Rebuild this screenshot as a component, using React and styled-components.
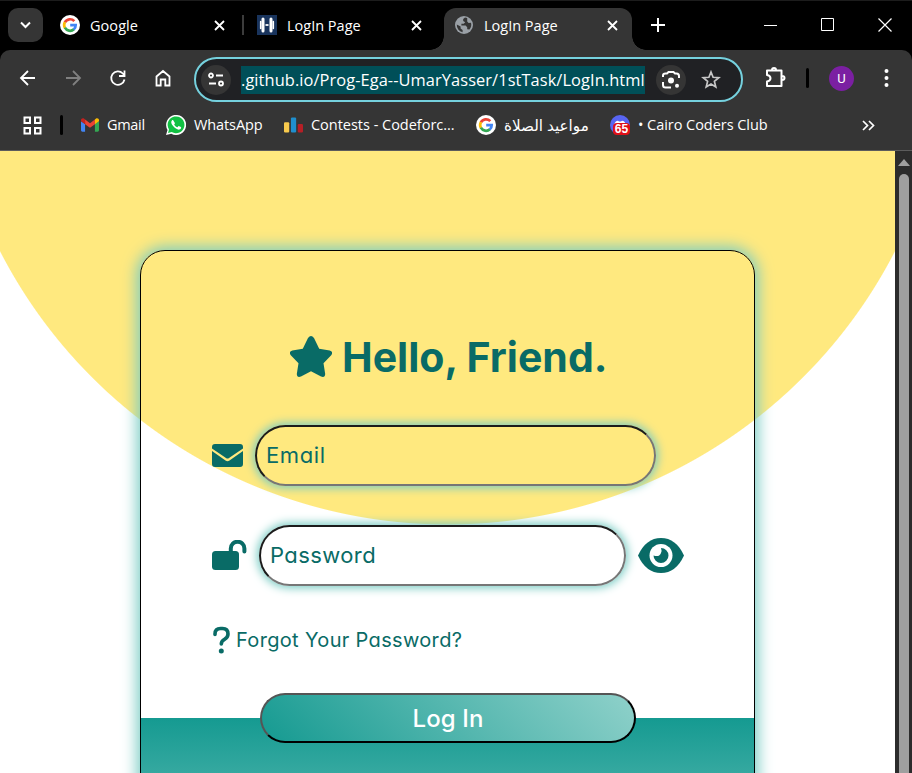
import React from 'react';
import styled, { createGlobalStyle } from 'styled-components';

const TEAL = '#096b66';
const GLOW = '#78cbc3';

const GlobalStyle = createGlobalStyle`
  *, *::before, *::after { box-sizing: border-box; }
  body { margin: 0; overflow: hidden; background: #000; }
`;

const Window = styled.div`
  width: 912px;
  height: 773px;
  display: flex;
  flex-direction: column;
  overflow: hidden;
  background: #000;
  color: #fff;
  font-family: "Open Sans", "Noto Sans", "DejaVu Sans", sans-serif;
`;

const TabStrip = styled.div`
  height: 50px;
  flex: none;
  display: flex;
  align-items: stretch;
  border-top: 1px solid #1c1c1c;
  padding: 7px 0 0 8px;
`;

const TabSearch = styled.div`
  width: 35px;
  height: 34px;
  border-radius: 10px;
  background: #353535;
  display: flex;
  align-items: center;
  justify-content: center;
`;

const Tab = styled.div`
  width: ${(p) => p.$width}px;
  margin-left: ${(p) => p.$gap}px;
  height: ${(p) => (p.$active ? 42 : 34)}px;
  padding: ${(p) => (p.$active ? '0 14px 8px 10px' : '0')};
  border-radius: 12px 12px 0 0;
  background: ${(p) => (p.$active ? '#353535' : 'transparent')};
  display: flex;
  align-items: center;
  gap: 10px;
  position: relative;

  &::before,
  &::after {
    content: ${(p) => (p.$active ? "''" : 'none')};
    position: absolute;
    bottom: 0;
    width: 14px;
    height: 14px;
  }
  &::before {
    left: -14px;
    background: radial-gradient(circle at 0 0, #000 13.5px, #353535 14px);
  }
  &::after {
    right: -14px;
    background: radial-gradient(circle at 100% 0, #000 13.5px, #353535 14px);
  }
`;

const Label = styled.span`
  flex: ${(p) => (p.$grow ? 1 : 'none')};
  padding-top: ${(p) => (p.$grow ? 2 : 0)}px;
  font-size: ${(p) => p.$size || 14.5}px;
  line-height: 20px;
  letter-spacing: ${(p) => p.$track || 0}px;
  white-space: nowrap;
`;

const TabDivider = styled.div`
  width: 2px;
  height: 20px;
  margin: 7px 0 0 17px;
  background: #3c3c3c;
`;

const NewTab = styled.div`
  height: 34px;
  margin-left: 19px;
  display: flex;
  align-items: center;
`;

const WindowControls = styled.div`
  margin-left: auto;
  height: 34px;
  display: flex;
  align-items: center;
  gap: 43px;
  padding-right: 20px;
`;

const Toolbar = styled.div`
  height: 56px;
  flex: none;
  display: flex;
  align-items: center;
  background: #353535;
  border-radius: 10px 10px 0 0;
  padding-left: 18px;
`;

const NavButtons = styled.div`
  display: flex;
  gap: 25px;
  width: 176px;
`;

const AddressBar = styled.div`
  width: 549px;
  height: 45px;
  margin-top: 3px;
  border: 2px solid #75d1de;
  border-radius: 23px;
  background: #202124;
  display: flex;
  align-items: center;
  padding-left: 5px;
`;

const RoundButton = styled.div`
  width: 30px;
  height: 30px;
  flex: none;
  margin-left: ${(p) => (p.$plain ? 10 : 0)}px;
  border-radius: 50%;
  background: ${(p) => (p.$plain ? 'transparent' : '#353535')};
  display: flex;
  align-items: center;
  justify-content: center;
`;

const SelectedUrl = styled.div`
  width: 404px;
  height: 28px;
  margin: 0 11px 0 10px;
  background: #004f58;
  font-size: 16.4px;
  line-height: 27px;
  letter-spacing: 0.08px;
  white-space: nowrap;
`;

const ToolbarActions = styled.div`
  display: flex;
  align-items: center;
  margin-left: 20px;
`;

const Separator = styled.div`
  width: 3px;
  height: 20px;
  margin: ${(p) => p.$margin};
  border-radius: 2px;
  background: #000;
`;

const Avatar = styled.div`
  width: 25px;
  height: 25px;
  border-radius: 50%;
  background: #7b1fa2;
  font: 13px/25px Roboto, sans-serif;
  text-align: center;
  margin-right: 30px;
`;

const BookmarksBar = styled.div`
  height: 45px;
  flex: none;
  display: flex;
  align-items: center;
  background: #353535;
  border-bottom: 1px solid #5c5c5c;
  padding: 0 37px 6px 23px;
`;

const Bookmark = styled.div`
  width: ${(p) => p.$width}px;
  display: flex;
  align-items: center;
  gap: 8px;
`;

const More = styled.div`
  margin-left: auto;
  display: flex;
`;

const Viewport = styled.div`
  flex: 1;
  min-height: 0;
  display: flex;
`;

const Page = styled.main`
  width: 895px;
  padding-top: 99px;
  background: radial-gradient(circle 503px at 447.5px -129.5px, #ffe97f 502.5px, #fff 503.5px);
  color: ${TEAL};
  font-family: Inter, "Open Sans", sans-serif;
  font-feature-settings: "cv11";
  overflow: hidden;
`;

const Card = styled.form`
  width: 615px;
  height: 700px;
  margin: 0 auto;
  border: 1px solid #000;
  border-radius: 25px;
  box-shadow: 0 0 15px 3px ${GLOW};
  background: linear-gradient(#159a91, #8fd1ca) 0 467px / 100% 210px no-repeat;
  padding: 78px 70px 0 71px;
`;

const Title = styled.h1`
  margin: 0;
  height: 54px;
  display: flex;
  align-items: center;
  padding-left: 78px;
  gap: 10px;
  font-size: 41px;
  font-weight: 700;
  white-space: nowrap;
`;

const TitleText = styled.span`
  padding-top: 1px;
  letter-spacing: 0;
`;

const Field = styled.div`
  height: 61px;
  margin-top: ${(p) => p.$top}px;
  display: flex;
  align-items: center;
`;

const IconSlot = styled.span`
  width: ${(p) => p.$width}px;
  display: flex;
  padding-bottom: 1px;
`;

const Input = styled.input`
  width: ${(p) => p.$width}px;
  height: 61px;
  margin: 0 12px 0 0;
  border: 2px solid;
  border-color: #1b1b1b #767676 #767676 #1b1b1b;
  border-radius: 31px;
  box-shadow: 0 0 10px 2px ${GLOW};
  background: transparent;
  padding: 0 10px 2px 9px;
  outline: none;
  font: 400 22px Inter, sans-serif;
  font-feature-settings: "cv11";
  letter-spacing: ${(p) => p.$track}px;
  &::placeholder { color: ${TEAL}; opacity: 1; }
`;

const Forgot = styled.div`
  height: 30px;
  margin-top: 39px;
  display: flex;
  align-items: center;
  gap: 5px;
  font-size: 20px;
  letter-spacing: 0.33px;
  white-space: nowrap;
`;

const LoginButton = styled.button`
  display: block;
  width: 376px;
  height: 50px;
  margin: 38px 0 0 48px;
  padding: 0;
  border: 2px solid;
  border-color: #555 #000 #000 #555;
  border-radius: 25px;
  background: linear-gradient(45deg, #159a91, #8fd1ca);
  color: #fff;
  font: 500 24px Inter, sans-serif;
  letter-spacing: 0.1px;
`;

const Scrollbar = styled.div`
  width: 17px;
  background: #2c2c2c;
  display: flex;
  flex-direction: column;
  align-items: center;
  padding: 8px 0 0 1px;
`;

const Thumb = styled.div`
  width: 10px;
  margin-top: 8px;
  flex: 1;
  border-radius: 5px 5px 0 0;
  background: #9f9f9f;
`;

const Icon = ({ w, h = w, box = `0 0 ${w} ${h}`, children, stroke = '#fff', sw = 2, fill = 'none' }) => (
  <svg width={w} height={h} viewBox={box} fill={fill} stroke={stroke} strokeWidth={sw}>
    {children}
  </svg>
);

const CloseIcon = () => (
  <Icon w={11} sw={1.800}><path d="M1 1l9 9M10 1l-9 9" /></Icon>
);

const GoogleIcon = () => (
  <svg width="20" height="20" viewBox="0 0 20 20" fill="none" strokeWidth="2.7">
    <circle cx="10" cy="10" r="10" fill="#fff" />
    <path d="M14.3 6.2A5.8 5.8 0 0 0 4.9 7.3" stroke="#ea4335" />
    <path d="M4.9 7.2a5.8 5.8 0 0 0 0 5.6" stroke="#fbbc05" />
    <path d="M4.9 12.7a5.8 5.8 0 0 0 9 1.6" stroke="#34a853" />
    <path d="M13.7 14.5A5.6 5.6 0 0 0 15.7 10.1H10.2" stroke="#4285f4" />
  </svg>
);

const LoginFavicon = () => (
  <svg width="20" height="20" viewBox="0 0 20 20">
    <path fill="#19345d" d="M0 0h20v20H0z" />
    <path d="M6 4v12M14 4v12" stroke="#fff" strokeWidth="3" strokeLinecap="round" />
    <path d="M3.700 6.500v7M16.300 6.500v7" stroke="#fff" strokeWidth="1.600" strokeLinecap="round" />
    <path d="M8.500 10h3" stroke="#fff" strokeWidth="1.800" />
  </svg>
);

const GlobeIcon = () => (
  <svg width="20" height="20" viewBox="0 0 20 20">
    <circle cx="10" cy="10" r="9" fill="#9aa0a6" />
    <path d="M11 2.6 9.2 4v2l2 1.3-1.5 1.5H7.4v1.8h4.2l1.6 1.7v2l2.2.2A7.3 7.3 0 0 0 17 7.8l-2.4.3-1.4-1.7V3.1zM2.8 9.5l3.8 2v2l2 1.5v2.2A7.3 7.3 0 0 1 2.8 9.5z" fill="#353535" />
  </svg>
);

const GmailIcon = () => (
  <svg width="18" height="14" viewBox="0 0 19 14">
    <path fill="#4285f4" d="M0 3l4.3 3v8H1.5A1.5 1.5 0 0 1 0 12.5z" />
    <path fill="#34a853" d="M14.7 6L19 3v9.500a1.500 1.500 0 0 1-1.500 1.500h-2.800z" />
    <path fill="#ea4335" d="M4.300 1.200l5.200 3.900 5.200-3.900v4.900L9.500 10 4.300 6.100z" />
    <path fill="#c5221f" d="M0 2C0 .2 2-.6 3.400.5l.9.7v4.900L0 3z" />
    <path fill="#fbbc04" d="M19 2c0-1.800-2-2.600-3.400-1.500l-.9.7v4.900L19 3z" />
  </svg>
);

const WhatsAppIcon = () => (
  <svg width="20" height="20" viewBox="0 0 20 20">
    <path fill="#fff" d="M0 20l1.500-5A10 10 0 1 1 5.300 18.700z" />
    <path fill="#12c143" d="M2 18l1-3.600A8.400 8.400 0 1 1 5.700 17z" />
    <path fill="#fff" d="M7.200 5.200c-.4-.3-.9-.2-1.300.3-1.300 1.500-.6 3.500 1.200 5.600 2 2.400 4.300 3.800 6.200 3.500 1.300-.3 2-1.300 1.800-2.300-.1-.3-2.300-1.400-2.600-1.200l-1 1.200c-.7.200-3.200-1.900-3.300-2.800l.8-1.200z" />
  </svg>
);

const CodeforcesIcon = () => (
  <svg width="19" height="16" viewBox="0 0 20 16">
    <rect y="5" width="5.500" height="11" rx="1.200" fill="#f8ca4d" />
    <rect x="7.300" width="5.500" height="16" rx="1.200" fill="#1f8fce" />
    <rect x="14.500" y="7" width="5.500" height="9" rx="1.200" fill="#b61f26" />
  </svg>
);

const DiscordIcon = () => (
  <svg width="20" height="20" viewBox="0 0 20 20">
    <circle cx="10" cy="10" r="10" fill="#5865f2" />
    <path d="M4.500 9Q5 6 8 5.700l1 .7h2l1-.7q3 .3 3.500 3.300z" fill="#fff" />
    <rect x="3" y="8" width="17" height="12" rx="4" fill="#df1017" />
    <text x="11.400" y="18.200" textAnchor="middle" fill="#fff" fontFamily="Liberation Sans" fontWeight="700" fontSize="12">65</text>
  </svg>
);

export default function App() {
  return (
    <Window>
      <GlobalStyle />
      <TabStrip>
        <TabSearch>
          <Icon w={11} h={8}><path d="M1 1.500l4.500 4.500L10 1.500" /></Icon>
        </TabSearch>
        <Tab $width={165} $gap={17}>
          <GoogleIcon /><Label $grow $track={0.05}>Google</Label><CloseIcon />
        </Tab>
        <TabDivider />
        <Tab $width={165} $gap={13}>
          <LoginFavicon /><Label $grow $track={0}>LogIn Page</Label><CloseIcon />
        </Tab>
        <Tab $active $width={188} $gap={22}>
          <GlobeIcon /><Label $grow $track={0}>LogIn Page</Label><CloseIcon />
        </Tab>
        <NewTab><Icon w={14}><path d="M7 0v14M0 7h14" /></Icon></NewTab>
        <WindowControls>
          <Icon w={14} sw={1}><path d="M0 7.500h13" /></Icon>
          <Icon w={14} sw={1}><path d="M.5.5h12v12H.5z" /></Icon>
          <Icon w={14} sw={1.200}><path d="M.5.5l13 13M13.500.5l-13 13" /></Icon>
        </WindowControls>
      </TabStrip>

      <Toolbar>
        <NavButtons>
          <Icon w={20} sw={1.800}><path d="M17 10H3.500M10 3L3 10l7 7" /></Icon>
          <Icon w={20} sw={1.800} stroke="#808080"><path d="M3 10h13.500M10 3l7 7-7 7" /></Icon>
          <Icon w={20} sw={1.800}><path d="M16.500 11.500A6.700 6.700 0 1 1 14.800 5.500L17 8M16.500 2.500V8h-5.500" /></Icon>
          <Icon w={20} sw={1.800}><path d="M3.500 8.500L10 3l6.500 5.500v9H12.300v-6H7.700v6H3.500z" /></Icon>
        </NavButtons>
        <AddressBar>
          <RoundButton>
            <Icon w={16} sw={1.800}><circle cx="3" cy="3.500" r="2" /><circle cx="13" cy="11.500" r="2" /><path d="M8 3.500h7M1 11.500h7" /></Icon>
          </RoundButton>
          <SelectedUrl>.github.io/Prog-Ega--UmarYasser/1stTask/LogIn.html</SelectedUrl>
          <RoundButton>
            <Icon w={20}>
              <path d="M2 7V5.500Q2 3.500 4.500 3.500H6L7.500 2h5L14 3.500h1.500Q18 3.500 18 6v2M2 12v3q0 2.500 2.500 2.500H10" />
              <circle cx="10" cy="10.500" r="3" fill="#fff" stroke="none" /><circle cx="16" cy="15.800" r="2" fill="#fff" stroke="none" />
            </Icon>
          </RoundButton>
          <RoundButton $plain>
            <Icon w={20} stroke="#c7c7c7" sw={1.700}><path d="M10 2l2.100 5.300 5.700.4-4.400 3.700 1.400 5.600-4.800-3-4.800 3 1.400-5.600L2.200 7.700l5.700-.4z" /></Icon>
          </RoundButton>
        </AddressBar>
        <ToolbarActions>
          <Icon w={24}><path d="M4 4.500h14.500v15.500H4v-4.500q3.500-.5 3.500-3.200T4 9zM9 4q0-2 2-2t2 2M19 10q2.500 0 2.500 2T19 14" strokeLinejoin="round" /></Icon>
          <Separator $margin="0 20px 0 19px" />
          <Avatar>U</Avatar>
          <Icon w={5} h={18} stroke="none" fill="#fff"><circle cx="2.500" cy="2" r="2" /><circle cx="2.500" cy="9" r="2" /><circle cx="2.500" cy="16" r="2" /></Icon>
        </ToolbarActions>
      </Toolbar>

      <BookmarksBar>
        <Icon w={19}><path d="M1.500 1.500h5.500v5.500H1.500zM12 1.500h5.500v5.500H12zM1.500 12h5.500v5.500H1.500zM12 12h5.500v5.500H12z" /></Icon>
        <Separator $margin="0 18px 0 18px" />
        <Bookmark $width={85}><GmailIcon /><Label $track={-0.3}>Gmail</Label></Bookmark>
        <Bookmark $width={118}><WhatsAppIcon /><Label $track={-0.1}>WhatsApp</Label></Bookmark>
        <Bookmark $width={192}><CodeforcesIcon /><Label $track={-0.02}>Contests - Codeforc...</Label></Bookmark>
        <Bookmark $width={134}><GoogleIcon /><Label $size={15.2} dir="rtl">مواعيد الصلاة</Label></Bookmark>
        <Bookmark $width={165}><DiscordIcon /><Label $track={-0.05}>• Cairo Coders Club</Label></Bookmark>
        <More><Icon w={13} h={11} sw={1.700}><path d="M1 1l4.500 4.500L1 10M7 1l4.500 4.500L7 10" /></Icon></More>
      </BookmarksBar>

      <Viewport>
        <Page>
          <Card>
            <Title>
              <Icon w={42} h={41} stroke="none" fill={TEAL}>
                <path d="M18 2q3-4 6 0l5.200 10.700 10.500 1.700q4 1.200 1.500 4.800l-7.700 8 1.700 10.800q-.2 4-4.200 2.500L21 35.200l-10 5.300q-4 1.500-4.200-2.500l1.700-10.800-7.700-8q-2.500-3.600 1.500-4.800l10.500-1.700z" />
              </Icon>
              <TitleText>Hello, Friend.</TitleText>
            </Title>
            <Field $top={42}>
              <IconSlot $width={43}>
                <Icon w={31} h={23} stroke="none" fill={TEAL}>
                  <path d="M3 0h25q3 0 3 3v1.500L17 14q-1.500 1-3 0L0 4.500V3q0-3 3-3zM0 7l13.500 9.500q2 1.300 4 0L31 7v13q0 3-3 3H3q-3 0-3-3z" />
                </Icon>
              </IconSlot>
              <Input $width={401} $track={0.6} placeholder="Email" />
            </Field>
            <Field $top={39}>
              <IconSlot $width={47}>
                <Icon w={35} h={30} stroke="none" fill={TEAL}>
                  <rect y="11" width="27" height="19" rx="3.500" />
                  <path d="M18.800 12V8.500a6.800 6.800 0 0 1 13.600 0V11.500" stroke={TEAL} strokeWidth="4" fill="none" strokeLinecap="round" />
                </Icon>
              </IconSlot>
              <Input $width={367} $track={0.4} placeholder="Password" />
              <Icon w={46} h={35} stroke="none" fill={TEAL}>
                <path d="M0 17.500Q8 0 23 0t23 17.500Q38 35 23 35T0 17.500z" />
                <circle cx="23" cy="17.500" r="11.500" fill="#fff" />
                <path d="M23 10a7.500 7.500 0 1 1-7.500 7.500q6 2 7.500-2.500 1-2.500 0-5z" />
              </Icon>
            </Field>
            <Forgot>
              <Icon w={19} h={28} sw={3.600} stroke={TEAL}>
                <path d="M3 8.500V8q0-5.500 5.500-5.500h2Q16 2.500 16 8q0 3.500-3.500 5.300Q9.300 15 9.300 18" strokeLinecap="round" />
                <circle cx="9.300" cy="25" r="2.500" fill={TEAL} stroke="none" />
              </Icon>
              <span>Forgot Your Password?</span>
            </Forgot>
            <LoginButton type="button">Log In</LoginButton>
          </Card>
        </Page>
        <Scrollbar>
          <Icon w={12} h={7} stroke="none" fill="#9f9f9f"><path d="M6 0l6 7H0z" /></Icon>
          <Thumb />
        </Scrollbar>
      </Viewport>
    </Window>
  );
}
